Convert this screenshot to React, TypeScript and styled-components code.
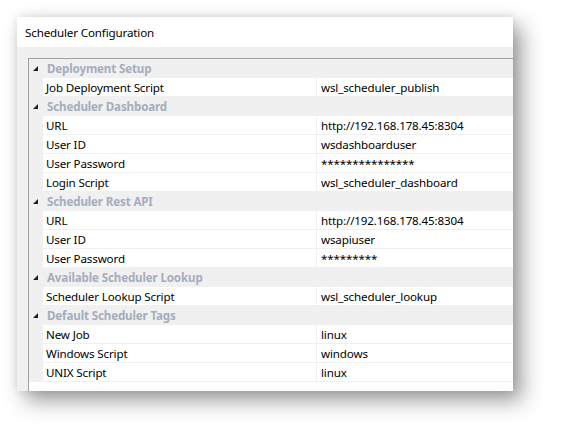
import React from "react";
import styled, { createGlobalStyle } from "styled-components";

const GlobalStyle = createGlobalStyle`
  html, body {
    margin: 0;
    padding: 0;
    background: #ffffff;
  }
`;

const Stage = styled.div`
  width: 561px;
  height: 439px;
  padding: 17px 0 0 17px;
  box-sizing: border-box;
  font-family: "Noto Sans", "Open Sans", sans-serif;
  font-size: 11.6px;
  letter-spacing: -0.15px;
  overflow: hidden;
`;

const Window = styled.div`
  width: 496px;
  height: 374px;
  background: #f0f0f0;
  display: flex;
  flex-direction: column;
  box-shadow: 0 0 10px rgba(0, 0, 0, 0.12), 9px 10px 20px rgba(0, 0, 0, 0.38);
`;

const TitleBar = styled.div`
  height: 30px;
  background: #ffffff;
  display: flex;
  align-items: center;
  padding-left: 8px;
  color: #000000;
`;

const Body = styled.div`
  flex: 1;
  padding: 11px 0 0 11px;
  display: flex;
`;

const Grid = styled.div`
  flex: 1;
  background: #ffffff;
  border-left: 1px solid #a0a0a0;
  border-top: 1px solid #a0a0a0;
  display: flex;
  flex-direction: column;
`;

const CategoryRow = styled.div`
  height: 19px;
  background: #f0f0f0;
  display: flex;
  align-items: center;
`;

const Toggle = styled.svg`
  width: 5px;
  height: 5px;
  margin: 0 9px 0 4px;
`;

const CategoryName = styled.span`
  font-weight: 700;
  color: #a5adbd;
`;

const ItemRow = styled.div`
  height: 19px;
  display: grid;
  grid-template-columns: 14px 273px 1px 1fr;
`;

const Margin = styled.div`
  background: #f0f0f0;
`;

const Cell = styled.div<{ $pad: number }>`
  display: flex;
  align-items: center;
  padding-left: ${(p) => p.$pad}px;
  border-bottom: 1px solid #f0f0f0;
  white-space: nowrap;
  overflow: hidden;
  color: #000000;
`;

const Divider = styled.div`
  background: #f0f0f0;
`;

type Item = { label: string; value: string };
type Category = { name: string; items: Item[] };

const categories: Category[] = [
  {
    name: "Deployment Setup",
    items: [{ label: "Job Deployment Script", value: "wsl_scheduler_publish" }],
  },
  {
    name: "Scheduler Dashboard",
    items: [
      { label: "URL", value: "http://192.168.178.45:8304" },
      { label: "User ID", value: "wsdashboarduser" },
      { label: "User Password", value: "***************" },
      { label: "Login Script", value: "wsl_scheduler_dashboard" },
    ],
  },
  {
    name: "Scheduler Rest API",
    items: [
      { label: "URL", value: "http://192.168.178.45:8304" },
      { label: "User ID", value: "wsapiuser" },
      { label: "User Password", value: "*********" },
    ],
  },
  {
    name: "Available Scheduler Lookup",
    items: [{ label: "Scheduler Lookup Script", value: "wsl_scheduler_lookup" }],
  },
  {
    name: "Default Scheduler Tags",
    items: [
      { label: "New Job", value: "linux" },
      { label: "Windows Script", value: "windows" },
      { label: "UNIX Script", value: "linux" },
    ],
  },
];

const App: React.FunctionComponent = () => {
  return (
    <>
      <GlobalStyle />
      <Stage>
        <Window>
          <TitleBar>Scheduler Configuration</TitleBar>
          <Body>
            <Grid>
              {categories.map((cat) => (
                <React.Fragment key={cat.name}>
                  <CategoryRow>
                    <Toggle viewBox="0 0 5 5">
                      <polygon points="5,0 5,5 0,5" fill="#1e1e1e" />
                    </Toggle>
                    <CategoryName>{cat.name}</CategoryName>
                  </CategoryRow>
                  {cat.items.map((item, index) => (
                    <ItemRow key={index}>
                      <Margin />
                      <Cell $pad={3}>{item.label}</Cell>
                      <Divider />
                      <Cell $pad={4}>{item.value}</Cell>
                    </ItemRow>
                  ))}
                </React.Fragment>
              ))}
            </Grid>
          </Body>
        </Window>
      </Stage>
    </>
  );
};

export default App;
